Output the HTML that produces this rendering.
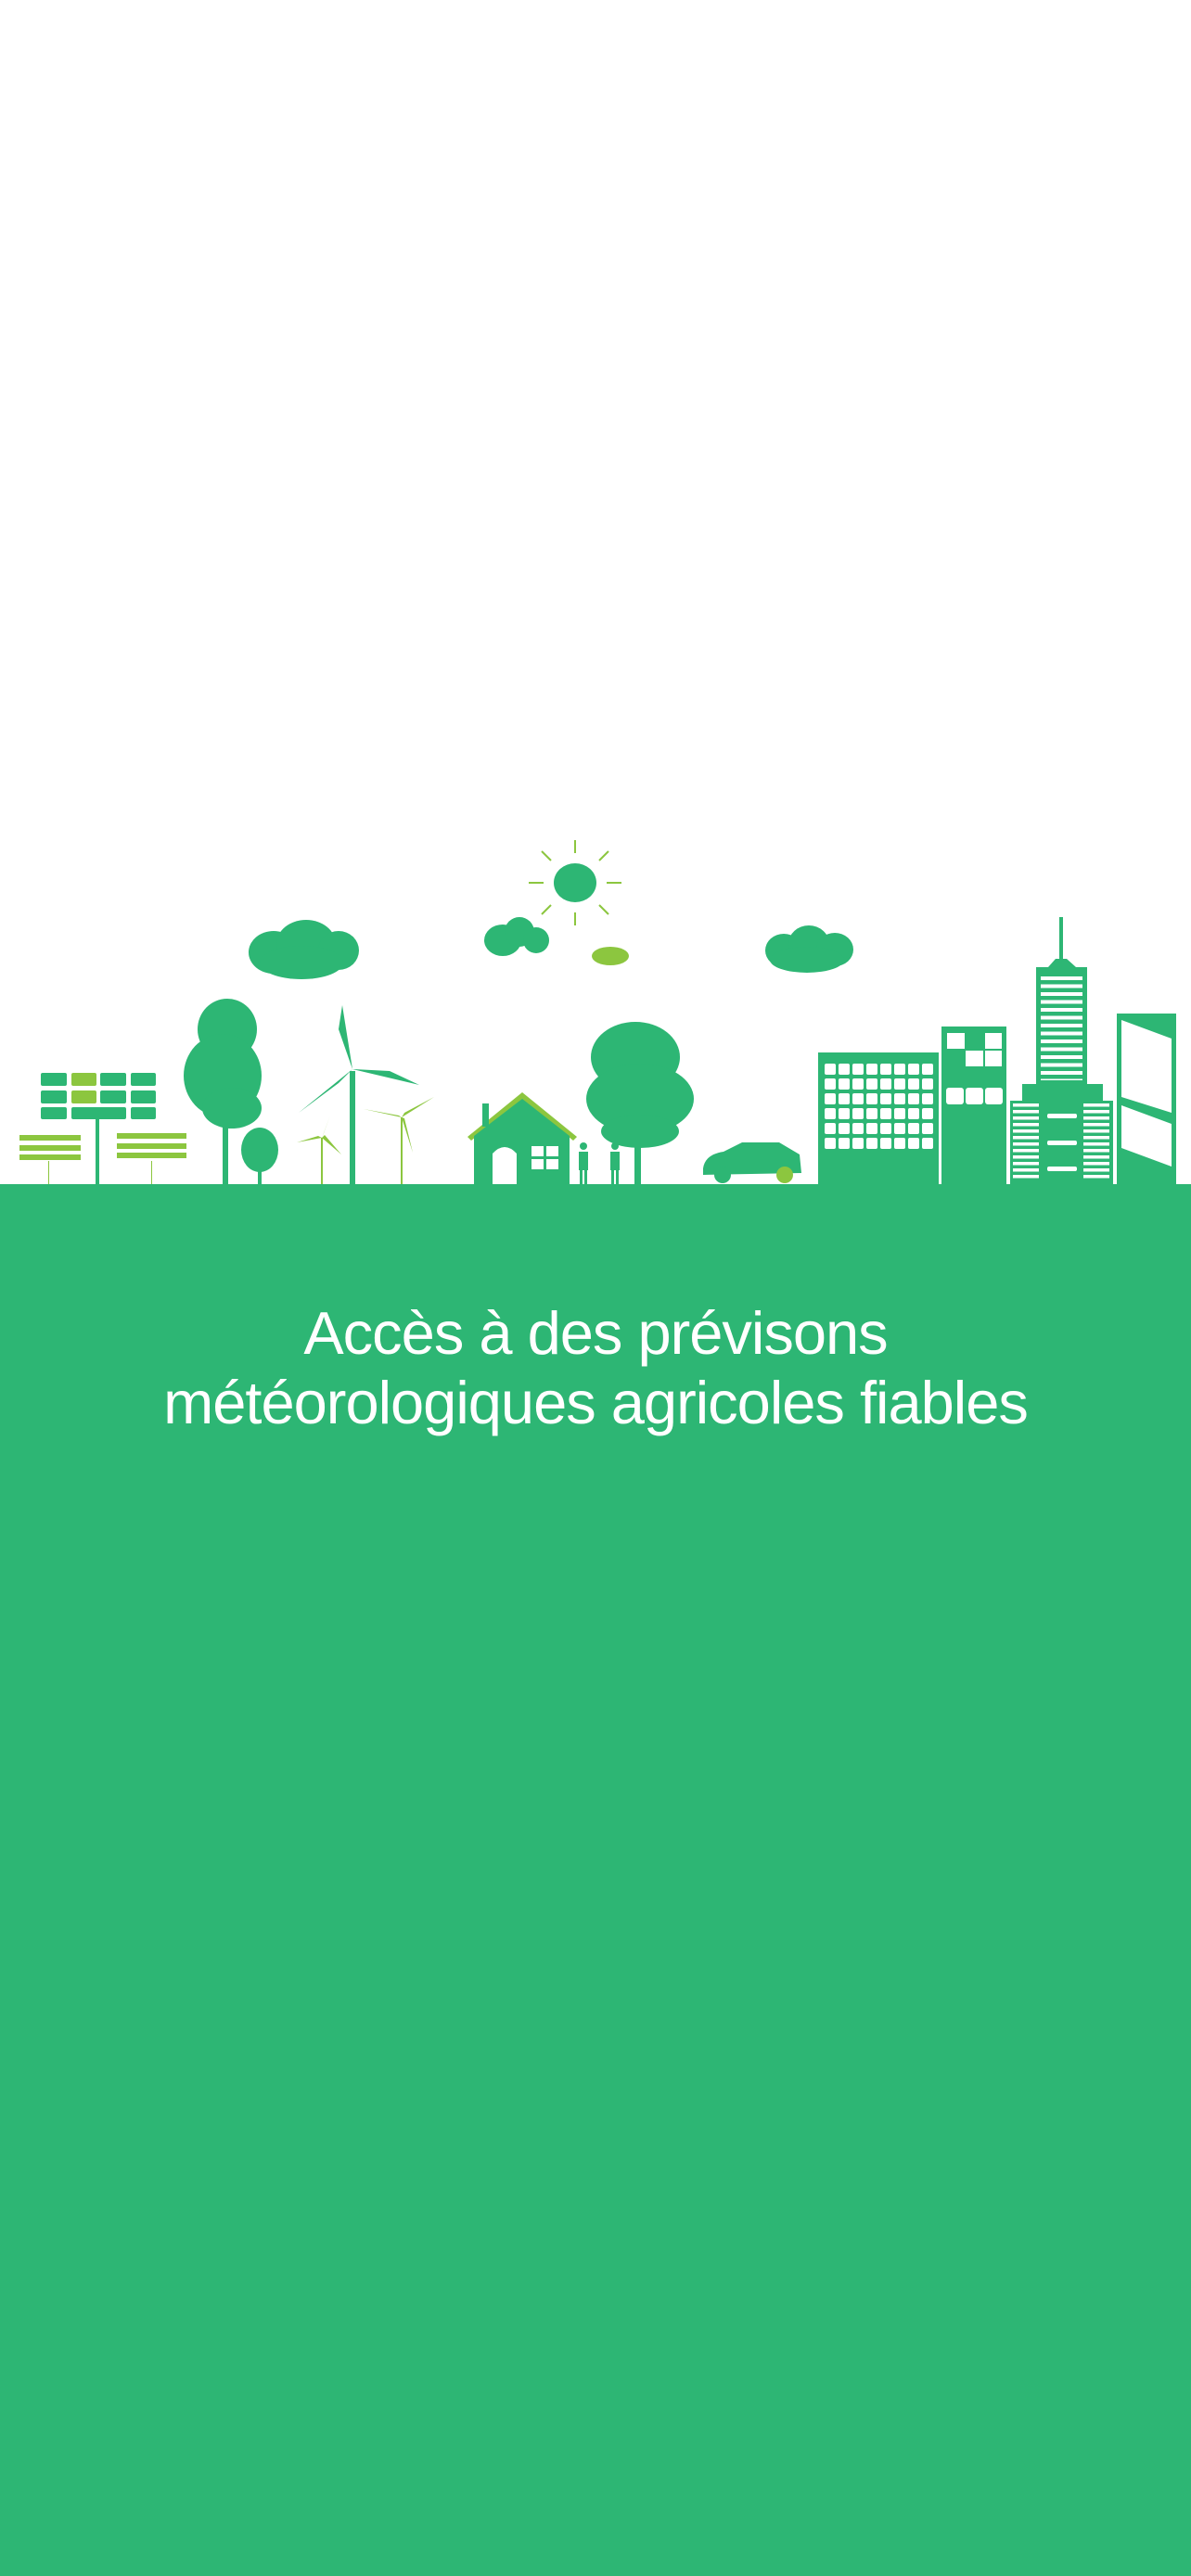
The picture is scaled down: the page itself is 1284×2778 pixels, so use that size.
<!DOCTYPE html>
<html><head><meta charset="utf-8"><style>
html,body{margin:0;padding:0}
body{width:1284px;height:2778px;background:#fff;position:relative;overflow:hidden;font-family:"Liberation Sans",sans-serif}
.green{position:absolute;left:0;top:1277px;width:1284px;height:1501px;background:#2db674}
.t{position:absolute;left:0;width:1284px;text-align:center;color:#fff;font-size:65px;letter-spacing:-1px;line-height:1;white-space:nowrap}
</style></head><body>
<svg width="1284" height="1280" style="position:absolute;left:0;top:0">
<defs>
<pattern id="win" x="889" y="1147" width="15" height="16" patternUnits="userSpaceOnUse"><rect width="12" height="12" rx="2" fill="#fff"/></pattern>
<pattern id="str" x="0" y="1053" width="10" height="8.5" patternUnits="userSpaceOnUse"><rect width="10" height="4" fill="#fff"/></pattern>
<pattern id="str2" x="0" y="1190" width="10" height="7" patternUnits="userSpaceOnUse"><rect width="10" height="3.5" fill="#fff"/></pattern>
</defs>
<g fill="#2db674">
<ellipse cx="620" cy="952" rx="23" ry="21"/>
<g stroke="#8cc63f" stroke-width="2">
<line x1="620" y1="906" x2="620" y2="920"/><line x1="620" y1="984" x2="620" y2="998"/>
<line x1="570" y1="952" x2="586" y2="952"/><line x1="654" y1="952" x2="670" y2="952"/>
<line x1="584" y1="918" x2="594" y2="928"/><line x1="656" y1="918" x2="646" y2="928"/>
<line x1="584" y1="986" x2="594" y2="976"/><line x1="656" y1="986" x2="646" y2="976"/>
</g>
<ellipse cx="295" cy="1027" rx="27" ry="23"/><ellipse cx="330" cy="1018" rx="32" ry="26"/><ellipse cx="365" cy="1025" rx="22" ry="21"/><ellipse cx="325" cy="1038" rx="45" ry="18"/>
<ellipse cx="542" cy="1014" rx="20" ry="17"/><ellipse cx="560" cy="1005" rx="16" ry="16"/><ellipse cx="578" cy="1014" rx="14" ry="14"/>
<ellipse cx="658" cy="1031" rx="20" ry="10" fill="#8cc63f"/>
<ellipse cx="845" cy="1025" rx="20" ry="18"/><ellipse cx="872" cy="1018" rx="22" ry="20"/><ellipse cx="900" cy="1024" rx="20" ry="18"/><ellipse cx="870" cy="1035" rx="40" ry="14"/>
<rect x="44" y="1157" width="28" height="14" rx="2"/><rect x="77" y="1157" width="27" height="14" rx="2" fill="#8cc63f"/><rect x="108" y="1157" width="28" height="14" rx="2"/><rect x="141" y="1157" width="27" height="14" rx="2"/>
<rect x="44" y="1176" width="28" height="14" rx="2"/><rect x="77" y="1176" width="27" height="14" rx="2" fill="#8cc63f"/><rect x="108" y="1176" width="28" height="14" rx="2"/><rect x="141" y="1176" width="27" height="14" rx="2"/>
<rect x="44" y="1194" width="28" height="13" rx="2"/><rect x="77" y="1194" width="59" height="13" rx="2"/><rect x="141" y="1194" width="27" height="13" rx="2"/>
<rect x="103" y="1207" width="4" height="70"/>
<g fill="#8cc63f"><rect x="21" y="1224" width="66" height="6"/><rect x="21" y="1235" width="66" height="6"/><rect x="21" y="1245" width="66" height="6"/>
<rect x="126" y="1222" width="75" height="6"/><rect x="126" y="1233" width="75" height="6"/><rect x="126" y="1243" width="75" height="6"/>
<rect x="52" y="1252" width="1" height="25"/><rect x="163" y="1252" width="1" height="25"/></g>
<ellipse cx="245" cy="1110" rx="32" ry="33"/><ellipse cx="240" cy="1160" rx="42" ry="45"/><ellipse cx="250" cy="1195" rx="32" ry="22"/>
<rect x="240" y="1180" width="6" height="97"/>
<ellipse cx="280" cy="1240" rx="20" ry="24"/><rect x="278" y="1255" width="4" height="22"/>
<rect x="377" y="1155" width="6" height="122"/>
<path d="M380 1153 L369 1084 L365 1110 Z"/><path d="M380 1153 L452 1170 L420 1155 Z"/><path d="M380 1153 L322 1200 L365 1168 Z"/>
<g fill="#8cc63f"><rect x="346" y="1227" width="2" height="50"/><path d="M347 1227 L356 1203 L349 1222Z M347 1227 L320 1232 L343 1225Z M347 1227 L368 1245 L350 1224Z"/>
<rect x="432" y="1205" width="2" height="72"/><path d="M433 1205 L468 1183 L436 1200Z M433 1205 L392 1196 L430 1203Z M433 1205 L445 1243 L436 1206Z"/></g>
<path d="M504 1226 L563 1178 L622 1226 L618 1230 L563 1186 L508 1230 Z" fill="#8cc63f"/>
<path d="M511 1225 L563 1185 L614 1225 L614 1277 L511 1277 Z"/>
<rect x="520" y="1190" width="7" height="25"/>
<path d="M531 1277 L531 1244 Q544 1230 557 1244 L557 1277 Z" fill="#fff"/>
<rect x="573" y="1236" width="29" height="25" fill="#fff"/><rect x="586" y="1236" width="3" height="25"/><rect x="573" y="1247" width="29" height="3"/>
<rect x="624" y="1242" width="10" height="20"/><circle cx="629" cy="1236" r="4"/><rect x="625" y="1262" width="3" height="15"/><rect x="630" y="1262" width="3" height="15"/>
<rect x="658" y="1242" width="10" height="20"/><circle cx="663" cy="1236" r="4"/><rect x="659" y="1262" width="3" height="15"/><rect x="664" y="1262" width="3" height="15"/>
<ellipse cx="685" cy="1140" rx="48" ry="38"/><ellipse cx="690" cy="1185" rx="58" ry="38"/><ellipse cx="690" cy="1220" rx="42" ry="18"/>
<rect x="684" y="1200" width="7" height="77"/>
<path d="M758 1260 Q760 1245 780 1242 L800 1232 L840 1232 L862 1245 L864 1265 L758 1267 Z"/>
<circle cx="779" cy="1267" r="9"/><circle cx="846" cy="1267" r="9" fill="#8cc63f"/>
<rect x="882" y="1135" width="130" height="142"/>
<rect x="889" y="1147" width="120" height="92" fill="url(#win)"/>
<rect x="1015" y="1107" width="70" height="170"/>
<g fill="#fff"><rect x="1021" y="1114" width="19" height="17"/><rect x="1062" y="1114" width="18" height="17"/><rect x="1041" y="1133" width="19" height="17"/><rect x="1062" y="1133" width="18" height="17"/>
<rect x="1020" y="1173" width="19" height="18" rx="3"/><rect x="1041" y="1173" width="19" height="18" rx="3"/><rect x="1062" y="1173" width="19" height="18" rx="3"/></g>
<rect x="1142" y="989" width="4" height="50"/><path d="M1130 1043 L1138 1034 L1150 1034 L1160 1043 Z"/>
<rect x="1117" y="1043" width="55" height="126"/>
<rect x="1122" y="1053" width="45" height="112" fill="url(#str)"/>
<rect x="1102" y="1169" width="87" height="22"/>
<rect x="1089" y="1187" width="111" height="90"/>
<rect x="1092" y="1190" width="28" height="84" fill="url(#str2)"/>
<rect x="1168" y="1190" width="28" height="84" fill="url(#str2)"/>
<g fill="#fff"><rect x="1129" y="1201" width="32" height="5" rx="2"/><rect x="1129" y="1230" width="32" height="5" rx="2"/><rect x="1129" y="1258" width="32" height="5" rx="2"/></g>
<rect x="1204" y="1093" width="64" height="184"/>
<path d="M1209 1100 L1263 1120 L1263 1200 L1209 1183 Z M1209 1192 L1263 1212 L1263 1258 L1209 1238 Z" fill="#fff"/>
</g>
</svg>
<div class="green"></div>
<div class="t" style="top:1405px">Accès à des prévisons</div>
<div class="t" style="top:1480px">météorologiques agricoles fiables</div>
</body></html>
